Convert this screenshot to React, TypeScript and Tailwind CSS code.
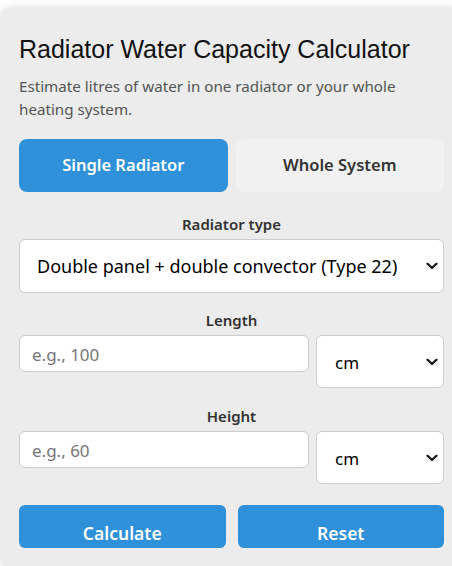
import React from "react";

const Chevron = () => (
  <svg
    className="pointer-events-none absolute right-[6px] top-1/2 -translate-y-1/2"
    width="12"
    height="8"
    viewBox="0 0 12 8"
    fill="none"
  >
    <path d="M1.5 1.8 L6 6 L10.5 1.8" stroke="#111" strokeWidth="2.2" strokeLinecap="round" strokeLinejoin="round" />
  </svg>
);

const sans = "font-['Noto_Sans',sans-serif]";

export default function App() {
  return (
    <div className="h-[566px] w-full overflow-hidden bg-white pt-2">
      <div
        className={`w-[463px] rounded-[12px] bg-[#ebeceb] px-[19px] pt-[27px] pb-[20px] shadow-[0_0_10px_rgba(0,0,0,0.15)] ${sans}`}
      >
        <h1 className="font-['Liberation_Sans',Arial,sans-serif] text-[25px] leading-[28px] text-[#111]">
          Radiator Water Capacity Calculator
        </h1>
        <p className="mt-3 text-[15.2px] leading-[23px] text-[#555]">
          Estimate litres of water in one radiator or your whole heating system.
        </p>

        <div className="mt-[18px] grid grid-cols-2 gap-2">
          <button className="h-[53px] rounded-[8px] bg-[#2e91d9] text-[16.5px] font-semibold text-white">
            Single Radiator
          </button>
          <button className="h-[53px] rounded-[8px] bg-[#f1f1f1] text-[16.5px] font-semibold text-[#333]">
            Whole System
          </button>
        </div>

        <div className="mt-[22px] text-center text-[15px] font-semibold leading-[20px] text-[#333]">
          Radiator type
        </div>
        <div className="relative mt-[5px]">
          <select className="h-[54px] w-full appearance-none rounded-[6px] border border-[#cccccc] bg-white pl-[17px] text-[18px] text-black outline-none">
            <option>Double panel + double convector (Type 22)</option>
          </select>
          <Chevron />
        </div>

        <div className="mt-[17px] text-center text-[15px] font-semibold leading-[20px] text-[#333]">
          Length
        </div>
        <div className="mt-[5px] flex items-start gap-[7px]">
          <input
            placeholder="e.g., 100"
            className="h-[37px] w-[290px] rounded-[6px] border border-[#cccccc] bg-white px-[12px] pt-[2px] text-[17px] outline-none placeholder:text-[#757575]"
          />
          <div className="relative flex-1">
            <select className="h-[53px] w-full appearance-none rounded-[6px] border border-[#cccccc] bg-white pl-[18px] pt-[3px] text-[17px] text-black outline-none">
              <option>cm</option>
            </select>
            <Chevron />
          </div>
        </div>

        <div className="mt-[18px] text-center text-[15px] font-semibold leading-[20px] text-[#333]">
          Height
        </div>
        <div className="mt-[5px] flex items-start gap-[7px]">
          <input
            placeholder="e.g., 60"
            className="h-[37px] w-[290px] rounded-[6px] border border-[#cccccc] bg-white px-[12px] pt-[2px] text-[17px] outline-none placeholder:text-[#757575]"
          />
          <div className="relative flex-1">
            <select className="h-[53px] w-full appearance-none rounded-[6px] border border-[#cccccc] bg-white pl-[18px] pt-[3px] text-[17px] text-black outline-none">
              <option>cm</option>
            </select>
            <Chevron />
          </div>
        </div>

        <div className="mt-[21px] grid grid-cols-2 gap-3">
          <button className="h-[43px] rounded-[6px] bg-[#2e91d9] pt-[13px] text-[17.5px] font-semibold leading-[22px] text-white">
            Calculate
          </button>
          <button className="h-[43px] rounded-[6px] bg-[#2e91d9] pt-[13px] text-[17.5px] font-semibold leading-[22px] text-white">
            Reset
          </button>
        </div>
      </div>
    </div>
  );
}
